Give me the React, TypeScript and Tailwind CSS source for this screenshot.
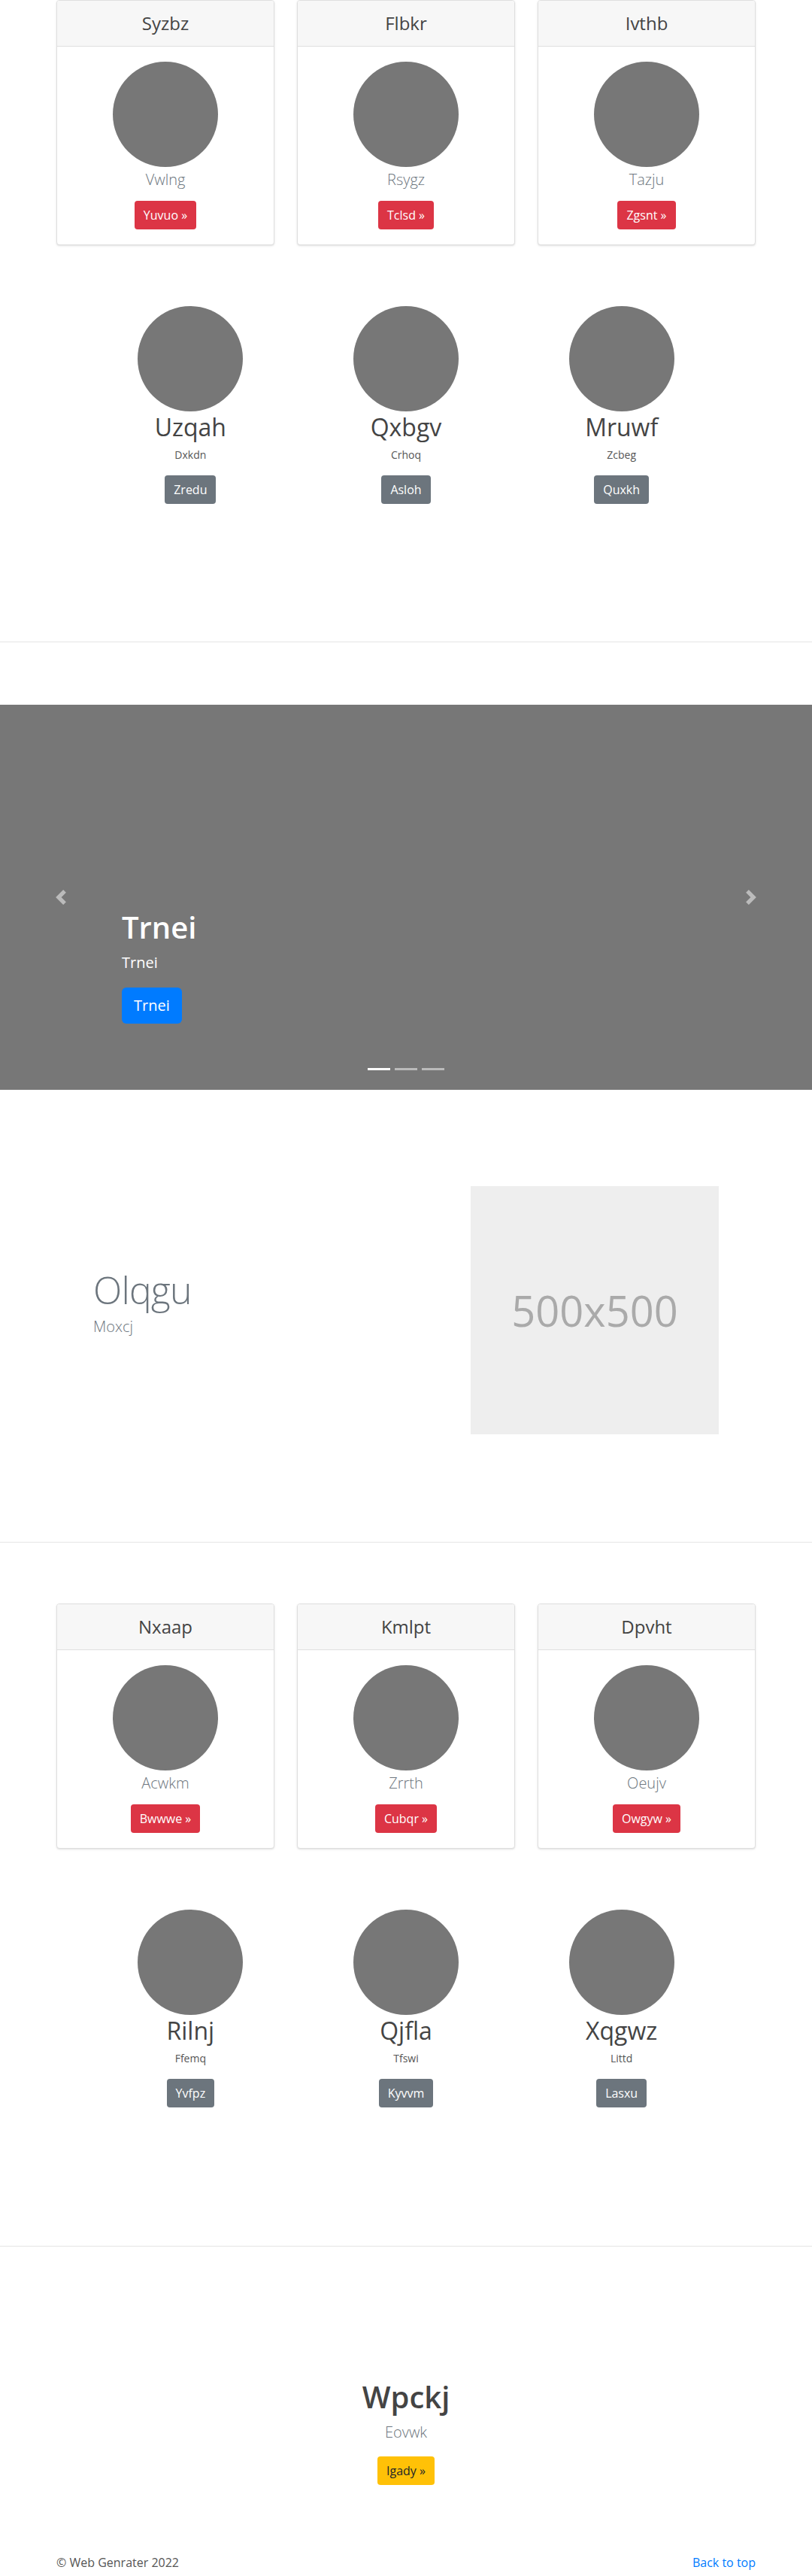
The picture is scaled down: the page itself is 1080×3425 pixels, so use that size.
import React from 'react'

type Card = { title: string; sub: string; btn: string }
type Person = { name: string; sub: string; btn: string }

const cardsA: Card[] = [
  { title: 'Syzbz', sub: 'Vwlng', btn: 'Yuvuo' },
  { title: 'Flbkr', sub: 'Rsygz', btn: 'Tclsd' },
  { title: 'Ivthb', sub: 'Tazju', btn: 'Zgsnt' },
]

const peopleA: Person[] = [
  { name: 'Uzqah', sub: 'Dxkdn', btn: 'Zredu' },
  { name: 'Qxbgv', sub: 'Crhoq', btn: 'Asloh' },
  { name: 'Mruwf', sub: 'Zcbeg', btn: 'Quxkh' },
]

const cardsB: Card[] = [
  { title: 'Nxaap', sub: 'Acwkm', btn: 'Bwwwe' },
  { title: 'Kmlpt', sub: 'Zrrth', btn: 'Cubqr' },
  { title: 'Dpvht', sub: 'Oeujv', btn: 'Owgyw' },
]

const peopleB: Person[] = [
  { name: 'Rilnj', sub: 'Ffemq', btn: 'Yvfpz' },
  { name: 'Qjfla', sub: 'Tfswi', btn: 'Kyvvm' },
  { name: 'Xqgwz', sub: 'Littd', btn: 'Lasxu' },
]

function PriceCard({ card }: { card: Card }) {
  return (
    <div className="rounded border border-[#dfdfdf] bg-white shadow-sm overflow-hidden">
      <div className="h-[61px] bg-[#f7f7f7] border-b border-[#dfdfdf] flex items-center justify-center">
        <h4 className="text-2xl font-medium text-[#444]">{card.title}</h4>
      </div>
      <div className="pt-5 pb-5 flex flex-col items-center">
        <div className="w-[140px] h-[140px] rounded-full bg-[#777]" />
        <p className="mt-[2px] text-xl leading-[30px] font-light text-[#6c757d]">{card.sub}</p>
        <button className="mt-[13px] h-[38px] px-3 rounded bg-[#dc3545] text-white text-base leading-6">
          {card.btn} »
        </button>
      </div>
    </div>
  )
}

function CardRow({ cards }: { cards: Card[] }) {
  return (
    <div className="w-[930px] mx-auto grid grid-cols-3 gap-[30px]">
      {cards.map(c => <PriceCard key={c.title} card={c} />)}
    </div>
  )
}

function PeopleRow({ people }: { people: Person[] }) {
  return (
    <div className="w-[860px] mx-auto grid grid-cols-3">
      {people.map(p => (
        <div key={p.name} className="flex flex-col items-center">
          <div className="w-[140px] h-[140px] rounded-full bg-[#777]" />
          <h2 className="mt-[2px] text-[32px] leading-[38px] text-[#444]">{p.name}</h2>
          <p className="mt-[7px] text-sm leading-[21px] text-[#555]">{p.sub}</p>
          <button className="mt-[17px] h-[38px] px-3 rounded bg-[#6c757d] text-white text-base leading-6">
            {p.btn}
          </button>
        </div>
      ))}
    </div>
  )
}

function Hr() {
  return <div className="border-t border-[#e5e5e5]" />
}

export default function App() {
  return (
    <div className="bg-white font-['Open_Sans','Noto_Sans',sans-serif] text-[#212529]">
      {/* first pricing block */}
      <CardRow cards={cardsA} />
      <div className="mt-[81px]">
        <PeopleRow people={peopleA} />
      </div>

      <div className="mt-[183px]"><Hr /></div>

      {/* Carousel */}
      <div className="mt-[83px] relative h-[512px] bg-[#777] overflow-hidden">
        <div className="absolute left-0 top-0 h-full w-[162px] flex items-center justify-center opacity-50">
          <svg width="20" height="20" viewBox="0 0 8 8" fill="#fff">
            <path d="M5.25 0l-4 4 4 4 1.5-1.5L4.25 4l2.5-2.5L5.25 0z" />
          </svg>
        </div>
        <div className="absolute right-0 top-0 h-full w-[162px] flex items-center justify-center opacity-50">
          <svg width="20" height="20" viewBox="0 0 8 8" fill="#fff">
            <path d="M2.75 0l-1.5 1.5L3.75 4l-2.5 2.5L2.75 8l4-4-4-4z" />
          </svg>
        </div>
        <div className="absolute left-[162px] bottom-[88px] text-white">
          <h1 className="text-[40px] leading-[48px] font-semibold">Trnei</h1>
          <p className="mt-[8px] text-xl leading-[30px]">Trnei</p>
          <button className="mt-[18px] h-[48px] px-4 rounded-md bg-[#007bff] text-white text-xl leading-[30px]">
            Trnei
          </button>
        </div>
        <div className="absolute bottom-[26px] left-0 right-0 flex justify-center gap-[6px]">
          <span className="w-[30px] h-[3px] bg-white" />
          <span className="w-[30px] h-[3px] bg-white/50" />
          <span className="w-[30px] h-[3px] bg-white/50" />
        </div>
      </div>

      {/* Featurette */}
      <div className="mt-[128px] w-[960px] mx-auto px-[64px] flex items-center justify-between">
        <div>
          <h2 className="text-[50px] leading-none font-light tracking-[-0.8px] text-[#6c757d]">Olqgu</h2>
          <p className="mt-[9px] mb-4 text-xl leading-[30px] font-light text-[#6c757d]">Moxcj</p>
        </div>
        <div className="w-[330px] h-[330px] bg-[#eee] flex items-center justify-center">
          <span className="text-[56px] text-[#aaa]">500x500</span>
        </div>
      </div>

      <div className="mt-[143px]"><Hr /></div>

      {/* second pricing block */}
      <div className="mt-[81px]">
        <CardRow cards={cardsB} />
      </div>
      <div className="mt-[81px]">
        <PeopleRow people={peopleB} />
      </div>

      <div className="mt-[184px]"><Hr /></div>

      {/* Call to action */}
      <div className="mt-[176px] flex flex-col items-center">
        <h1 className="text-[40px] leading-[48px] font-semibold text-[#444]">Wpckj</h1>
        <p className="mt-[8px] text-xl leading-[30px] font-light text-[#6c757d]">Eovwk</p>
        <button className="mt-[17px] h-[38px] px-3 rounded bg-[#ffc107] text-[#212529] text-base leading-6">
          Igady »
        </button>
      </div>

      {/* Footer */}
      <div className="mt-[91px] w-[930px] mx-auto flex justify-between text-base leading-6">
        <p className="text-[#555]">© Web Genrater 2022</p>
        <a href="#" className="text-[#007bff]">Back to top</a>
      </div>
    </div>
  )
}
